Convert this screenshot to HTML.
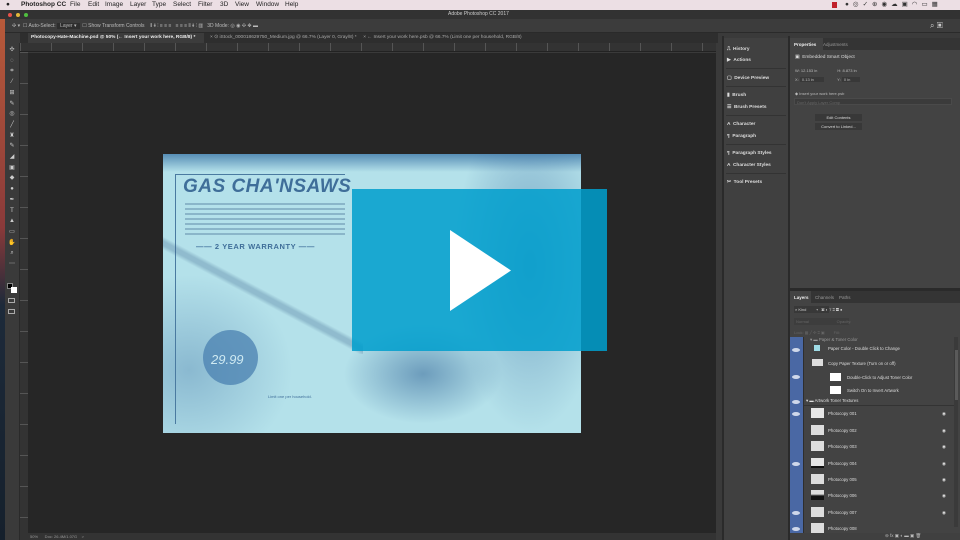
<!DOCTYPE html>
<html><head><meta charset="utf-8"><style>
*{margin:0;padding:0;box-sizing:border-box}
body{width:960px;height:540px;overflow:hidden;background:#3a3a3a;font-family:"Liberation Sans",sans-serif;position:relative;color:#ddd}
.a{position:absolute}
.t{font-size:5px;white-space:nowrap}
.eye{position:absolute;left:2px;width:8px;height:4px;border-radius:50%;background:#cfd8ea}
</style></head><body>
<div class="a" style="left:0;top:0;width:960px;height:10px;background:#ecdfe4;color:#222;font-size:6.5px;line-height:10px">
<span class="a" style="left:6px">●</span>
<span class="a" style="left:21px;font-weight:bold">Photoshop CC</span>
<span class="a" style="left:70px">File</span><span class="a" style="left:88px">Edit</span><span class="a" style="left:105px">Image</span><span class="a" style="left:130px">Layer</span><span class="a" style="left:152px">Type</span><span class="a" style="left:173px">Select</span><span class="a" style="left:198px">Filter</span><span class="a" style="left:220px">3D</span><span class="a" style="left:235px">View</span><span class="a" style="left:256px">Window</span><span class="a" style="left:285px">Help</span>
<span class="a" style="left:832px;top:2px;width:5px;height:6px;background:#c0202a"></span>
<span class="a" style="left:845px;letter-spacing:4px;color:#333">●◎✓⊕◉☁▣◠▭▦</span>
</div>
<div class="a" style="left:0;top:10px;width:960px;height:9px;background:#323232"></div>
<div class="a" style="left:8px;top:13px;width:4px;height:4px;border-radius:50%;background:#e9524a"></div>
<div class="a" style="left:16px;top:13px;width:4px;height:4px;border-radius:50%;background:#e1b63a"></div>
<div class="a" style="left:24px;top:13px;width:4px;height:4px;border-radius:50%;background:#4fbf3f"></div>
<div class="a t" style="left:448px;top:11px;color:#ccc">Adobe Photoshop CC 2017</div>
<div class="a" style="left:0;top:19px;width:960px;height:14px;background:#3c3c3c;border-bottom:1px solid #2a2a2a"></div>
<div class="a t" style="left:12px;top:23px;color:#bbb">✣ ▾ &nbsp;☐ Auto-Select: <span style="background:#2e2e2e;padding:0 3px">Layer ▾</span> &nbsp;☐ Show Transform Controls &nbsp;&nbsp; ⫴ ⫵ ⫶ ≡ ≡ ≡ &nbsp; ≡ ≡ ≡ ⫴ ⫵ ⫶ ▥ &nbsp; 3D Mode: ◎ ◉ ✣ ✥ ▬</div>
<div class="a t" style="left:930px;top:21px;font-size:8px;color:#ccc">⌕ ▣</div>
<div class="a" style="left:20px;top:33px;width:698px;height:10px;background:#2e2e2e"></div>
<div class="a" style="left:28px;top:33px;width:176px;height:10px;background:#3c3c3c"></div>
<div class="a t" style="left:31px;top:35px;color:#eee;font-weight:bold;font-size:4.8px">Photocopy-Hate-Machine.psd @ 50% (← Insert your work here, RGB/8) *</div>
<div class="a t" style="left:210px;top:35px;color:#aaa;font-size:4.8px">× ⊙ iStock_000018629750_Medium.jpg @ 66.7% (Layer 0, Gray/8) * &nbsp;&nbsp;&nbsp; × ← Insert your work here.psb @ 66.7% (Limit one per household, RGB/8)</div>
<div class="a" style="left:20px;top:43px;width:698px;height:9px;background:#333;border-bottom:1px solid #222;background-image:repeating-linear-gradient(90deg,#555 0 1px,transparent 1px 31px)"></div>
<div class="a" style="left:20px;top:52px;width:8px;height:481px;background:#333;background-image:repeating-linear-gradient(180deg,#555 0 1px,transparent 1px 31px)"></div>
<div class="a" style="left:0;top:19px;width:5px;height:521px;background:linear-gradient(#b85a3a,#8a3a3a 40%,#1d2a3a 55%,#15202c)"></div>
<div class="a" style="left:5px;top:43px;width:15px;height:497px;background:#3a3a3a;border-right:1px solid #2a2a2a"></div>
<div class="a" style="left:6px;top:45px;width:12px;font-size:6px;line-height:10.7px;color:#ccc;text-align:center">✣<br>◌<br>⌗<br>⁄<br>⊞<br>✎<br>◎<br>╱<br>♜<br>✎<br>◢<br>▣<br>◆<br>●<br>✒<br>T<br>▲<br>▭<br>✋<br>⌕<br>⋯</div>
<div class="a" style="left:7px;top:283px;width:6px;height:6px;background:#000;border:1px solid #888"></div>
<div class="a" style="left:11px;top:287px;width:6px;height:6px;background:#fff"></div>
<div class="a" style="left:8px;top:298px;width:7px;height:5px;border:1px solid #aaa"></div>
<div class="a" style="left:8px;top:309px;width:7px;height:5px;border:1px solid #aaa"></div>
<div class="a" style="left:28px;top:53px;width:688px;height:480px;background:#262626"></div>
<div class="a" style="left:163px;top:154px;width:418px;height:279px;background:#b4e1ea;overflow:hidden">
 <div class="a" style="left:0;top:0;width:418px;height:18px;background:linear-gradient(rgba(63,120,168,.8),rgba(180,225,234,0))"></div>
 <div class="a" style="left:290px;top:0;width:128px;height:279px;background:radial-gradient(ellipse at 60% 40%,rgba(60,110,160,.5),rgba(180,225,234,0) 70%)"></div>
 <div class="a" style="left:180px;top:170px;width:160px;height:100px;background:radial-gradient(ellipse,rgba(50,100,150,.55),rgba(180,225,234,0) 70%)"></div>
 <div class="a" style="left:0;top:120px;width:130px;height:160px;background:radial-gradient(ellipse at 20% 60%,rgba(60,110,160,.35),rgba(180,225,234,0) 70%)"></div>
 <div class="a" style="left:12px;top:20px;width:1px;height:250px;background:#4a7aa0"></div>
 <div class="a" style="left:12px;top:20px;width:170px;height:1px;background:#4a7aa0"></div>
 <div class="a" style="left:20px;top:22px;font-size:19px;font-style:italic;font-weight:bold;color:#3f6e99;letter-spacing:.5px">GAS CHA'NSAWS</div>
 <div class="a" style="left:22px;top:49px;width:160px;height:32px;background:repeating-linear-gradient(180deg,rgba(60,100,140,.35) 0 2px,transparent 2px 5px)"></div>
 <div class="a" style="left:33px;top:88px;font-size:7.5px;font-weight:bold;color:#3f6e99;letter-spacing:.6px">—— 2 YEAR WARRANTY ——</div>
 <div class="a" style="left:40px;top:176px;width:55px;height:55px;border-radius:50%;background:#4a80b0;opacity:.75"></div>
 <div class="a" style="left:48px;top:198px;font-size:13px;font-style:italic;color:#cfeaf2">29.99</div>
 <div class="a" style="left:0;top:80px;width:200px;height:120px;background:linear-gradient(28deg,transparent 46%,rgba(60,100,140,.3) 48%,rgba(60,100,140,.3) 50%,transparent 52%)"></div>
 <div class="a t" style="left:105px;top:240px;color:#3f6e99;font-size:4px">Limit one per household.</div>
</div>
<div class="a" style="left:352px;top:189px;width:255px;height:162px;background:rgba(0,158,205,.86)"></div>
<svg class="a" style="left:450px;top:230px" width="62" height="82"><polygon points="0,0 0,81 61,40.5" fill="#fff"/></svg>
<div class="a" style="left:20px;top:533px;width:698px;height:7px;background:#333"></div>
<div class="a t" style="left:30px;top:534px;color:#999;font-size:4px">50% &nbsp;&nbsp;&nbsp;&nbsp; Doc: 26.4M/1.07G &nbsp;&nbsp; &gt;</div>
<div class="a" style="left:716px;top:43px;width:6px;height:497px;background:#3a3a3a"></div>
<div class="a" style="left:722px;top:36px;width:2px;height:504px;background:#2a2a2a"></div>
<div class="a" style="left:724px;top:38px;width:64px;height:502px;background:#404040"></div>
<div class="a" style="left:788px;top:36px;width:2px;height:504px;background:#2a2a2a"></div>
<div class="a" style="left:727px;top:44px;font-size:4.8px;font-weight:bold;color:#ddd;line-height:12px;white-space:nowrap">
<div style="position:absolute;top:0">⎍ &nbsp;History</div><div style="position:absolute;top:11px">▶ &nbsp;Actions</div>
<div style="position:absolute;top:29px">▢ &nbsp;Device Preview</div>
<div style="position:absolute;top:46px">▮ &nbsp;Brush</div><div style="position:absolute;top:58px">☰ &nbsp;Brush Presets</div>
<div style="position:absolute;top:75px">A &nbsp;Character</div><div style="position:absolute;top:87px">¶ &nbsp;Paragraph</div>
<div style="position:absolute;top:104px">¶ &nbsp;Paragraph Styles</div><div style="position:absolute;top:116px">A &nbsp;Character Styles</div>
<div style="position:absolute;top:133px">✂ &nbsp;Tool Presets</div></div>
<div class="a" style="left:726px;top:68px;width:60px;height:1px;background:#333"></div>
<div class="a" style="left:726px;top:86px;width:60px;height:1px;background:#333"></div>
<div class="a" style="left:726px;top:115px;width:60px;height:1px;background:#333"></div>
<div class="a" style="left:726px;top:144px;width:60px;height:1px;background:#333"></div>
<div class="a" style="left:726px;top:173px;width:60px;height:1px;background:#333"></div>
<div class="a" style="left:790px;top:38px;width:170px;height:250px;background:#434343"></div>
<div class="a" style="left:790px;top:38px;width:170px;height:12px;background:#343434"></div>
<div class="a" style="left:790px;top:38px;width:33px;height:12px;background:#434343"></div>
<div class="a t" style="left:794px;top:42px;color:#eee;font-weight:bold;font-size:4.5px">Properties</div>
<div class="a t" style="left:823px;top:42px;color:#999;font-size:4.5px">Adjustments</div>
<div class="a t" style="left:795px;top:55px;color:#ddd;font-size:4.8px">▣ &nbsp;Embedded Smart Object</div>
<div class="a t" style="left:795px;top:68px;color:#bbb;font-size:4px">W: 12.153 in &nbsp;&nbsp;&nbsp;&nbsp;&nbsp;&nbsp;&nbsp;&nbsp;&nbsp;&nbsp;&nbsp;&nbsp;&nbsp;&nbsp;&nbsp;&nbsp; H: 8.873 in</div>
<div class="a t" style="left:795px;top:77px;color:#bbb;font-size:4px">X: <span style="background:#383838;padding:0 10px 0 2px">0.13 in</span> &nbsp;&nbsp;&nbsp;&nbsp;&nbsp;&nbsp;&nbsp;&nbsp;&nbsp;&nbsp; Y: <span style="background:#383838;padding:0 10px 0 2px">0 in</span></div>
<div class="a t" style="left:795px;top:91px;color:#bbb;font-size:4px">◆ Insert your work here.psb</div>
<div class="a" style="left:794px;top:98px;width:158px;height:7px;background:#3b3b3b;border:1px solid #4a4a4a"></div>
<div class="a t" style="left:797px;top:100px;color:#666;font-size:4px">Don't Apply Layer Comp</div>
<div class="a" style="left:815px;top:114px;width:47px;height:7px;background:#383838;color:#ddd;font-size:4px;text-align:center;line-height:7px">Edit Contents</div>
<div class="a" style="left:815px;top:123px;width:47px;height:7px;background:#383838;color:#ddd;font-size:4px;text-align:center;line-height:7px">Convert to Linked...</div>
<div class="a" style="left:790px;top:288px;width:170px;height:3px;background:#2a2a2a"></div>
<div class="a" style="left:790px;top:291px;width:170px;height:249px;background:#434343"></div>
<div class="a" style="left:790px;top:291px;width:170px;height:12px;background:#343434"></div>
<div class="a" style="left:790px;top:291px;width:21px;height:12px;background:#434343"></div>
<div class="a t" style="left:794px;top:295px;color:#eee;font-weight:bold;font-size:4.5px">Layers</div>
<div class="a t" style="left:815px;top:295px;color:#999;font-size:4.5px">Channels &nbsp;&nbsp; Paths</div>
<div class="a" style="left:794px;top:306px;width:35px;height:7px;background:#383838"></div>
<div class="a t" style="left:795px;top:307px;color:#ccc;font-size:4px">⌕ Kind &nbsp;&nbsp;&nbsp;&nbsp;&nbsp;&nbsp;&nbsp; ▾ &nbsp; ▣ ◐ T ⌗ ▤ ●</div>
<div class="a" style="left:794px;top:318px;width:55px;height:7px;background:#3d3d3d"></div>
<div class="a t" style="left:796px;top:319px;color:#666;font-size:4px">Normal &nbsp;&nbsp;&nbsp;&nbsp;&nbsp;&nbsp;&nbsp;&nbsp;&nbsp;&nbsp;&nbsp;&nbsp;&nbsp;&nbsp;&nbsp;&nbsp;&nbsp;&nbsp;&nbsp;&nbsp;&nbsp;&nbsp;&nbsp; Opacity:</div>
<div class="a t" style="left:794px;top:330px;color:#666;font-size:4px">Lock: ▦ ╱ ✣ ⌗ ▣ &nbsp;&nbsp;&nbsp;&nbsp;&nbsp;&nbsp; Fill:</div>
<div class="a" style="left:790px;top:337px;width:13px;height:203px;background:#4a68a4">
<div class="eye" style="top:11px"></div><div class="eye" style="top:38px"></div><div class="eye" style="top:63px"></div><div class="eye" style="top:75px"></div><div class="eye" style="top:125px"></div><div class="eye" style="top:174px"></div><div class="eye" style="top:190px"></div>
</div>
<div class="a" style="left:803px;top:337px;width:1px;height:203px;background:#2e2e2e"></div>
<div class="a" style="left:954px;top:337px;width:4px;height:190px;background:#3a3a3a"></div>
<div class="a" style="left:955px;top:350px;width:3px;height:50px;background:#5a5a5a"></div>
<div class="a" style="left:792px;top:337px;width:160px;font-size:4.3px;color:#ddd;white-space:nowrap">
<div style="position:absolute;top:0;left:18px;color:#999">▾ ▬ Paper &amp; Toner Color</div>
<div style="position:absolute;top:8px;left:22px;width:6px;height:6px;background:#9fdbe5"></div>
<div style="position:absolute;top:9px;left:36px">Paper Color - Double Click to Change</div>
<div style="position:absolute;top:22px;left:20px;width:11px;height:7px;background:#ddd"></div>
<div style="position:absolute;top:24px;left:36px">Copy Paper Texture (Turn on or off)</div>
<div style="position:absolute;top:36px;left:38px;width:11px;height:8px;background:#fff"></div>
<div style="position:absolute;top:38px;left:55px">Double-Click to Adjust Toner Color</div>
<div style="position:absolute;top:49px;left:38px;width:11px;height:8px;background:#fff"></div>
<div style="position:absolute;top:51px;left:55px">Switch On to Invert Artwork</div>
<div style="position:absolute;top:61px;left:14px">▾ ▬ Artwork Toner Textures</div>
</div>
<div class="a" style="left:804px;top:405px;width:150px;height:1px;background:#333"></div>
<div class="a" style="left:792px;top:408px;width:160px;font-size:4.3px;color:#ddd;white-space:nowrap">
<div style="position:absolute;top:0;left:19px;width:13px;height:10px;background:#e6e6e6"></div><div style="position:absolute;top:3px;left:36px">Photocopy 001</div><div style="position:absolute;top:3px;left:150px">◉</div>
<div style="position:absolute;top:17px;left:19px;width:13px;height:10px;background:#ddd"></div><div style="position:absolute;top:20px;left:36px">Photocopy 002</div><div style="position:absolute;top:20px;left:150px">◉</div>
<div style="position:absolute;top:33px;left:19px;width:13px;height:10px;background:#ddd"></div><div style="position:absolute;top:36px;left:36px">Photocopy 003</div><div style="position:absolute;top:36px;left:150px">◉</div>
<div style="position:absolute;top:50px;left:19px;width:13px;height:10px;background:#e6e6e6;border-bottom:2px solid #111"></div><div style="position:absolute;top:53px;left:36px">Photocopy 004</div><div style="position:absolute;top:53px;left:150px">◉</div>
<div style="position:absolute;top:66px;left:19px;width:13px;height:10px;background:#ddd"></div><div style="position:absolute;top:69px;left:36px">Photocopy 005</div><div style="position:absolute;top:69px;left:150px">◉</div>
<div style="position:absolute;top:82px;left:19px;width:13px;height:10px;background:linear-gradient(#ddd 40%,#111 60%)"></div><div style="position:absolute;top:85px;left:36px">Photocopy 006</div><div style="position:absolute;top:85px;left:150px">◉</div>
<div style="position:absolute;top:99px;left:19px;width:13px;height:10px;background:#ddd"></div><div style="position:absolute;top:102px;left:36px">Photocopy 007</div><div style="position:absolute;top:102px;left:150px">◉</div>
<div style="position:absolute;top:115px;left:19px;width:13px;height:10px;background:#ddd"></div><div style="position:absolute;top:118px;left:36px">Photocopy 008</div>
</div>
<div class="a" style="left:790px;top:533px;width:170px;height:7px;background:#404040"></div>
<div class="a t" style="left:885px;top:533px;color:#bbb;font-size:4.5px">⊖ fx ▣ ◐ ▬ ▣ 🗑</div>
</body></html>
